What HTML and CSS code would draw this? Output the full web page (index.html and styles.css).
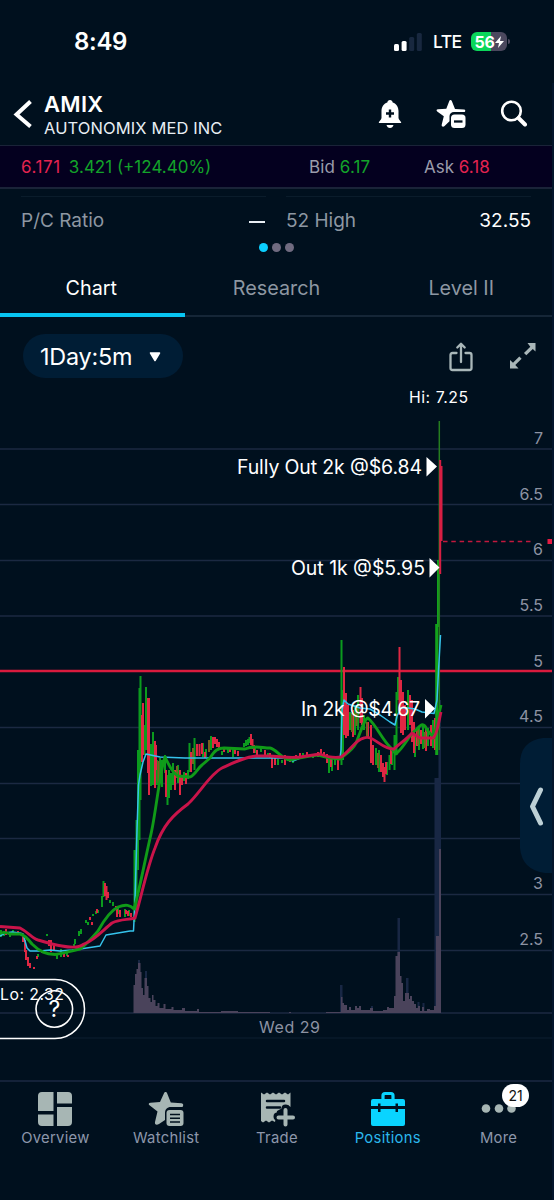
FILE: index.html
```html
<!DOCTYPE html>
<html lang="en">
<head>
<meta charset="utf-8">
<title>AMIX</title>
<link rel="stylesheet" href="styles.css">
</head>
<body>
<div class="phone">
  <div class="status">
    <span class="clock">8:49</span>
    <div class="status-right">
      <svg class="signal" width="28" height="18" viewBox="0 0 28 18"><rect x="0" y="11" width="5" height="7" rx="1.5" fill="#fff"/><rect x="7.6" y="8" width="5" height="10" rx="1.5" fill="#fff"/><rect x="15.2" y="4" width="5" height="14" rx="1.5" fill="#18283f"/><rect x="22.8" y="0" width="5" height="18" rx="1.5" fill="#18283f"/></svg>
      <span class="lte">LTE</span>
      <div class="battery"><span>56</span><svg width="9" height="12" viewBox="0 0 9 12"><path d="M6 0 0 7h4l-1 5 6-7H5z" fill="#fff"/></svg></div>
    </div>
  </div>

  <header class="header">
    <svg class="back" width="20" height="30" viewBox="0 0 20 30"><path d="M17.500 2.500 3.500 15.500 17.500 27.500" fill="none" stroke="#fff" stroke-width="4"/></svg>
    <div class="names"><h1>AMIX</h1><p>AUTONOMIX MED INC</p></div>
    <div class="actions">
      <svg width="24" height="30" viewBox="0 0 24 30"><path d="M12 1c1.500 0 2.500 1 2.700 2.400C18.500 4.700 20.500 8 20.500 12v7c0 1.500 2.800 3.500 2.800 5H.7c0-1.500 2.800-3.500 2.800-5v-7c0-4 2-7.300 5.800-8.600C9.500 2 10.500 1 12 1zM8.500 26h7c-.5 1.800-1.800 3-3.500 3s-3-1.200-3.500-3z" fill="#fff"/><path d="M12 10.500v8M8 14.500h8" stroke="#00101e" stroke-width="2.400"/></svg>
      <svg width="30" height="30" viewBox="0 0 30 30"><path d="M14.500 1c.6 0 1 .3 1.300.9l3.200 8 9 .7c1.500.2 1.700 1.500.7 2.300H18c-2.700 0-4.500 1.800-4.500 4.400v5l-5.200 4.900c-1.200 1-3 .2-2.600-1.500l2.100-8.500-6.600-4.800c-1.200-1-.7-2 .8-2.100l8.300-.5 3-7.900c.2-.6.600-.9 1.200-.9z" fill="#fff"/><rect x="15" y="15.500" width="14.500" height="13.500" rx="3.500" fill="#fff"/><path d="M18 22.500h8.500" stroke="#00101e" stroke-width="2.300"/></svg>
      <svg width="28" height="28" viewBox="0 0 28 28"><circle cx="11.500" cy="12" r="9.300" fill="none" stroke="#fff" stroke-width="2.600"/><path d="m18.500 19 6.500 6.500" stroke="#fff" stroke-width="4" stroke-linecap="round"/></svg>
    </div>
  </header>

  <div class="quote">
    <span class="change"><b class="down">6.171</b><b class="up">3.421 (+124.40%)</b></span>
    <span class="bid">Bid <b class="up">6.17</b></span>
    <span class="ask">Ask <b class="down">6.18</b></span>
  </div>

  <section class="stats">
    <div class="stat"><span>P/C Ratio</span><i class="dash"></i></div>
    <div class="stat"><span>52 High</span><em>32.55</em></div>
  </section>
  <div class="pager"><i class="on"></i><i></i><i></i></div>

  <nav class="tabs"><span class="tab active">Chart</span><span class="tab">Research</span><span class="tab">Level II</span></nav>

  <div class="tools">
    <div class="interval"><span>1Day:5m</span><svg width="12" height="10" viewBox="0 0 12 10"><path d="M1.500 1h9L6 8.500z" fill="#fff" stroke="#fff" stroke-width="1.500" stroke-linejoin="round"/></svg></div>
    <svg class="share" width="24" height="30" viewBox="0 0 24 30" fill="none" stroke="#a9b7b9" stroke-width="2.300" stroke-linecap="round" stroke-linejoin="round"><path d="M7.500 11H3.500Q1.500 11 1.500 13V26Q1.500 28 3.500 28H20.500Q22.500 28 22.500 26V13Q22.500 11 20.500 11H16.500M12 20V2M8.300 5.500 12 1.700l3.700 3.800"/></svg>
    <svg class="expand" width="28" height="28" viewBox="0 0 28 28"><path d="M18.500 1H26.500v8.500l-2.700-2.500-6.500 6.300-2.300-2.300 6.300-6.300zM9.500 26.500H1v-8.500l3 2.700 6.300-6.200 2.300 2.300-6.300 6.200z" fill="#a9b7b9"/></svg>
  </div>

  <main class="chart">
    <svg width="554" height="700" viewBox="0 380 554 700">
      <path class="grid" d="M0 449H552M0 504.500H552M0 560.500H552M0 616H552M0 727.500H552M0 783.500H552M0 838.500H552M0 894.500H552M0 950.500H552M0 1013H552"/>
      <path class="grid faint" d="M0 1038H552"/>

      <g class="vol-blue">
        <path d="M434.500 1013V778h4V1013zM438.500 1013V700h2.500V1013zM397.500 1013V918h2.500V1013zM340 1013V985h2.500V1013zM406 1013V978h2.500V1013zM145 1013V971h2V1013zM138 1013V960h2V1013zM417.500 1013V1002h2V1013zM422.500 1013V1003h2V1013zM371 1013V1006h2V1013z"/>
      </g>
      <path class="vol" d="M133.500 1013V985H135V974H136.500V969H138V963H140.500V972H141.500V988H143V995H144.500V978H147V986H148.500V998H150.500V1002H152V995H153.500V1000H155.500V1006H157.500V1003H159.500V1008H163.500V1004H165.500V1009H171.500V1007H173.500V1010H182V1008H185V1011H197V1009H199V1012H221V1011H238V1012H270V1013zM289 1013V1012H291V1013zM326 1013V1012H341V997H342.500V1003H344V1005H347V1010H349V1007H351V1010H355V1006H357V1008H359V1006H361V1010H370V1008H373V1011H383V1010H387V1007H389V1008H394V996H395.500V956H397.500V952H400V976H401.500V983H403V1001H405V993H409V999H410V996H412V1001H414V1004H416V1008H418V1006H420V1011H422V1007H424V1011H427V1009H430V1010H434V1006H436V936H439V849H441V1013z"/>

      <path class="level" d="M0 671H552"/>

      <g class="candle green">
        <path d="M1 930V937M4 931V936M10 932V937M13 930V935M38 954V957M47 934V936M57 953V959M61 949V957M67 953V956M74 944V946M75 939V944M79 931V936M81 929V934M86 920V923M88 922V925M93 914V916M96 911V914M98 910V913M102 896V907M103.500 881V897M110 900V903M113 902V906M118 907V914M125 909V917M129 910V916"/>
        <path d="M134.500 850V922M136.500 820V910M138 750V870M139.500 688V840M140.500 676V800M144.500 725V755M146 687V750M151 744V786M153 732V785M157 760V785M160 758V782M162 760V787M165 755V773M167.500 775V805M169 770V798M171 773V790M173 763V785M178 765V783M184 772V781M188 770V779M189.500 743V772M194.500 738V770M203 743V757M206 749V757M211 736V750M222 751V755M228 748V753M233 747V757M239 748V750M244 743V747M246 740V746M248 739V745M249.500 737V743M255 747V753M261 748V752M268 753V757M278 759V765M282 760V763M293 757V763M303 753V757M313 754V758M326 755V758M329 757V773M332 758V771M335 757V765"/>
        <path d="M341.500 640V765M343 690V760M350 712V730M355 705V735M358 695V730M364 715V730M376 748V765M379 750V772M387 762V775M389.500 755V770M392 752V765M394.500 735V770M396.500 692V755M398 677V700M408 690V730M415 735V757M419 728V750M423 725V749M428 728V746M433 720V748"/>
      </g>
      <g class="candle red">
        <path d="M6 929V935M18 931V935M23 936V942M25 940V952M26 950V960M28 957V966M30 963V968M34 967V969M37 956V959M42 950V953M49 940V946M51 940V952M54 943V951M64 954V957M68 955V957M90 917V920M92 922V925M97 909V913M105 883V896M106.500 886V900M108 892V898M116 906V910M117 909V917M120 910V917M126 910V914M128 911V916M131 913V917"/>
        <path d="M142 715V762M143 703V755M148 698V773M149 698V795M155 741V788M156 745V770M166 770V797M175 770V790M180 770V795M182 775V785M186 773V784M191 752V772M197 744V756M199.500 744V756M202 743V754M205 752V758M213 737V748M215 737V744M217 739V747M219 742V750M224 748V752M230 748V752M235 749V754M238 751V756M251 734V745M252.500 739V749M254 745V753M257 750V755M265 750V757M270 753V758M272 757V768M275 758V765M285 755V765M290 756V762M296 755V760M300 753V758M307 752V756M318 752V757M321 749V756M324 752V758M327 754V763M331 756V767M338 756V770"/>
        <path d="M344 667V735M346 693V738M348 705V736M353 710V737M360.500 687V723M362 698V725M368 722V737M371 725V763M373 745V765M381 755V772M383 763V777M384.500 767V782M386 762V774M391 750V764M399.500 647V715M401 680V733M403 692V735M405 705V730M410 695V725M412 700V742M414 722V753M417 728V746M421 730V744M426 727V751M431 725V746M435 718V750"/>
      </g>
      <g class="candle olive"><path d="M158.500 761V783M177 766V778M193 748V764M209 740V752M352 713V732M356.500 708V726M367 722V736M378 753V768M418 728V745M425 732V748"/></g>

      <path class="spike" d="M436.700 624V755M438.500 560V627"/>
      <path class="wick" d="M439.300 421V750"/>
      <path class="drop" d="M440.200 460V574M441.500 466V541"/>

      <path class="vwap" d="M0 936 5 933 12 932 20 933 23 934 27 948 30 951 40 951 50 950 60 951 72 950 80 949 100 946 106 935 130 931 133.500 931 135 900 137 830 138.500 785 140 775 143 762 146 754 160 757 185 758H270L285 758 293 761 305 756 320 755 330 758 340 758 341 750 342 710 344 700 348 704 360 708 370 709 380 715 390 722 395 725 397 716 401 708 408 708 415 709 422 712 434 713.500 437 700 438.500 671 440.500 635"/>
      <path class="ma green-line" d="M0 933Q6 932 10 934L20 934Q25 935 32 944C40 952 46 954 55 954.500C65 953 75 950 80 949C88 943 92 938 98 931C104 920 110 911 118 907C126 904 130 905 134 909C139 892 145 860 151 834C156 812 160 770 165 757C168 763 172 773 178 776L190 777C195 775 198 768 202 765L210 758C215 750 218 748 224 748L245 749C254 745 262 748 270 748C276 749 282 759 290 760C300 758 308 756 318 755L330 758 340 759C345 754 352 751 356 743C360 734 364 719 368 718C376 725 382 739 390 747L396 754C406 745 410 733 416 730C421 724 424 722 427 730L434 738 438 718 441 705"/>
      <path class="ma red-line" d="M0 926.500 20 928C28 932 32 938 38 940C48 943 55 945 62 946C72 948 79 948 84 944C95 940 103 930 112 923C120 919 128 920 135 918C142 894 147 868 155 848C163 825 173 815 188 804C200 793 210 774 222 768C235 762 245 757 256 756L270 756C280 757 290 758 300 757L320 754C330 758 335 758 341 757C350 751 356 739 364 738C373 734 382 750 394 749C400 743 406 740 412 733L420 738 433 738C437 736 439 720 441 712"/>

      <path d="M443 541.500H531" stroke="#c2183e" stroke-width="1.400" stroke-dasharray="4.500 3.800"/>
      <rect x="547.500" y="539" width="5" height="5" fill="#e61b42"/>

      <g class="axis"><text x="543" y="443.500">7</text><text x="543" y="499.500">6.5</text><text x="543" y="555">6</text><text x="543" y="611">5.5</text><text x="543" y="667">5</text><text x="543" y="722">4.5</text><text x="543" y="889">3</text><text x="543" y="945">2.5</text></g>
      <text class="date" x="259" y="1033" textLength="61">Wed 29</text>
      <text class="hilo" x="409" y="403" textLength="59">Hi: 7.25</text>
      <text class="hilo" x="0" y="1000" textLength="64">Lo: 2.32</text>
      <g class="note"><text x="237" y="474" textLength="185">Fully Out 2k @$6.84</text><text x="291" y="575" textLength="134">Out 1k @$5.95</text><text x="301" y="716" textLength="119">In 2k @$4.67</text></g>
      <path d="M426.500 457 437 466.500 426.500 476.500zM429.500 558 439.500 567.500 429.500 577.500zM425 699 435 708.500 425 718.500z" fill="#fff"/>

      <path d="M554 738H543Q520 741 520 764V848Q522 870 545 873H554z" fill="#001d35"/>
      <path d="m540.500 790-8 16.500 8 16.500" fill="none" stroke="#bdd0d6" stroke-width="5" stroke-linecap="round" stroke-linejoin="round"/>

      <path d="M0 979.500H55A29 29 0 0 1 55 1038.500H0" fill="none" stroke="#fff" stroke-width="1.500"/>
      <circle cx="54.300" cy="1009" r="18.300" fill="none" stroke="#fff" stroke-width="1.600"/>
      <text class="help" x="54.500" y="1017">?</text>
    </svg>
  </main>

  <footer class="nav">
    <div class="item"><svg width="36" height="36" viewBox="0 0 36 36" fill="#a7b6b4"><path d="M5 1h11.500v19H1V5Q1 1 5 1zM20 1h11Q35 1 35 5v7.500H20zM1 23.500h15.500V35H5Q1 35 1 31zM20 16h15v15Q35 35 31 35H20z"/></svg><span>Overview</span></div>
    <div class="item"><svg width="36" height="36" viewBox="0 0 36 36"><path d="M17.500 1c.8 0 1.300.5 1.600 1.200l3.700 9.300 10.700.7c1.900.2 2.300 2 1 3.800H23c-4 0-6 2.500-6 6v7l-6 4c-2.500 1.500-4.600.5-4-2l2.500-10.500L1.500 14.300c-1.400-1.200-.8-2.400 1-2.600l9.500-.7L16 2.200c.3-.7.8-1.200 1.500-1.200z" fill="#a7b6b4"/><rect x="18.500" y="19" width="17" height="16" rx="3" fill="#a7b6b4"/><path d="M22 23.500h10M22 27.200h10M22 31h10" stroke="#00101e" stroke-width="1.600"/></svg><span>Watchlist</span></div>
    <div class="item"><svg width="36" height="36" viewBox="0 0 36 36"><path d="M2 1.500 5 3.500 8 1.500 11 3.500 14 1.500 17 3.500 20 1.500 23 3.500 26 1.500 29 3.500 31.500 1.500V16L29 14 18 20 16 31 13 29.500 10 31.500 7 29.500 4 31.500 2 30z" fill="#a7b6b4"/><path d="M8 10h17M8 16.500h13" stroke="#00101e" stroke-width="2.500" stroke-linecap="round"/><path d="M26.500 17.500v16M18.500 25.500h16" stroke="#00101e" stroke-width="8" stroke-linecap="round"/><path d="M26.500 19v14.500M19.500 26.500H34" stroke="#a7b6b4" stroke-width="4" stroke-linecap="round"/></svg><span>Trade</span></div>
    <div class="item active"><svg width="36" height="36" viewBox="0 0 36 36"><path d="M13 8V4.500Q13 2.500 15 2.500H21Q23 2.500 23 4.500V8" fill="none" stroke="#09d4ff" stroke-width="3.200"/><path d="M3 8H33Q35 8 35 10V15H28V12.500H25.500V15H10.500V12.500H8V15H1V10Q1 8 3 8zM1 18H8V21H10.500V18H25.500V21H28V18H35V33Q35 35 33 35H3Q1 35 1 33z" fill="#09d4ff"/></svg><span>Positions</span></div>
    <div class="item more"><svg width="36" height="36" viewBox="0 0 36 36" fill="#a7b6b4"><circle cx="5" cy="17.500" r="4.300"/><circle cx="18" cy="17.500" r="4.300"/><circle cx="30.500" cy="17.500" r="4.300"/></svg><span>More</span><b class="badge">21</b></div>
  </footer>
  <i class="edge"></i>
</div>
</body>
</html>
```
FILE: styles.css
```css
* { box-sizing: border-box; }
body { margin: 0; background: #00101e; font-family: Inter, "Liberation Sans", sans-serif; color: #fff; }
.phone { position: relative; width: 554px; height: 1200px; overflow: hidden; display: flex; flex-direction: column; background: #00101e; }
b, em, i { font-weight: inherit; font-style: normal; }
svg { display: block; flex: none; }

.status { height: 83px; display: flex; justify-content: space-between; padding: 0 47px 0 74px; align-items: center; }
.clock { font-size: 24px; font-weight: 600; letter-spacing: -.3px; }
.status-right { display: flex; align-items: center; }
.lte { margin-left: 11px; width: 28px; font-size: 17.500px; font-weight: 500; letter-spacing: -.6px; }
.battery { position: relative; margin-left: 10px; width: 36px; height: 19px; border-radius: 6px; background: linear-gradient(90deg, #0bd75a 56%, #4b485e 56%); display: flex; align-items: center; justify-content: center; font-size: 16px; font-weight: 700; letter-spacing: -.3px; }
.battery::after { content: ""; position: absolute; right: -3px; top: 7px; width: 2px; height: 5px; border-radius: 0 2px 2px 0; background: #4b485e; }

.header { height: 62px; display: flex; align-items: flex-start; padding: 0 25px 0 13px; }
.back { margin: 16px 11px 0 0; }
.names { flex: 1; padding-top: 9px; }
h1 { margin: 0; font-size: 22px; line-height: 24px; font-weight: 600; letter-spacing: .3px; }
.names p { margin: 2px 0 0; font-size: 16.500px; line-height: 20px; letter-spacing: .1px; color: #e8eef4; }
.actions { display: flex; gap: 34px; padding: 16px 1px 0 0; }

.quote { height: 44px; border: solid #1a2338; border-width: 1px 0 2px; background: #04001f; display: flex; align-items: center; padding: 0 0 0 21px; font-size: 17px; letter-spacing: 0; color: #9b9cab; }
.change { width: 288px; display: flex; gap: 8px; }
.change .down { letter-spacing: .6px; }
.bid { width: 115px; letter-spacing: .1px; }
.ask { letter-spacing: 0; }
.up { color: #13a32a; }
.down { color: #e42350; }

.stats { height: 52px; display: grid; grid-template-columns: 245px 245px; column-gap: 20px; padding: 7px 0 0 21px; }
.stat { border-top: 1px solid #0a1c2b; display: flex; justify-content: space-between; align-items: center; font-size: 19px; color: #8d97a2; padding-top: 3px; }
.stat em { color: #fff; }
.dash { width: 16px; height: 2px; background: #e8eef4; margin: 2px 1px 0 0; }
.pager { height: 20px; display: flex; justify-content: center; gap: 4px; padding: 2px 2px 0 0; }
.pager i { width: 9px; height: 9px; border-radius: 50%; background: #706b80; }
.pager .on { background: #0bcfff; }

.tabs { height: 56px; display: grid; grid-template-columns: repeat(3, 1fr); border-bottom: 2px solid #152637; }
.tab { display: flex; align-items: center; justify-content: center; font-size: 19.800px; color: #8d97a2; padding-right: 1px; }
.tab.active { color: #fff; border-bottom: 4px solid #07c5f2; margin-bottom: -2px; padding-top: 2px; padding-right: 2px; }

.tools { height: 63px; display: flex; padding: 17px 17px 0 23px; }
.interval { width: 160px; height: 44px; border-radius: 22px; background: #001d35; display: flex; align-items: center; padding: 1px 0 0 17px; gap: 17px; font-size: 23.400px; letter-spacing: -.2px; }
.share { margin: 8px 36px 0 266px; }
.expand { margin-top: 8px; }

.chart { height: 700px; }
.grid { stroke: #1b2942; stroke-width: 1.300; }
.faint { stroke: #081a2b; }
.vol { fill: #4a435b; }
.vol-blue { fill: #182744; }
.level { stroke: #d91b3e; stroke-width: 2.700; }
.candle { fill: none; stroke-width: 2; }
.green { stroke: #0b9b1e; }
.red { stroke: #df2743; }
.olive { stroke: #77611f; }
.spike { stroke: #13a31c; stroke-width: 3; }
.wick { stroke: #267e20; stroke-width: 1.500; }
.drop { stroke: #d71e43; stroke-width: 2; }
.vwap { fill: none; stroke: #35c3ec; stroke-width: 1.500; stroke-linejoin: round; }
.ma { fill: none; stroke-width: 2.900; stroke-linejoin: round; }
.green-line { stroke: #109b18; }
.red-line { stroke: #c9144a; }
.axis text, .date { font-size: 16px; fill: #8d93a3; }
.axis text { text-anchor: end; }
.hilo { font-size: 15.800px; fill: #fff; }
.note { font-size: 19.500px; fill: #fff; }
.help { font-size: 23px; fill: #fff; text-anchor: middle; }

.nav { height: 120px; border-top: 2px solid #142239; display: grid; grid-template-columns: repeat(5, 1fr); padding-top: 9px; }
.item { position: relative; display: flex; flex-direction: column; align-items: center; font-size: 14.800px; letter-spacing: .3px; line-height: 18px; color: #8d97ab; }
.item span { margin-top: 2px; }
.item.active { color: #2bb8ee; }
.badge { position: absolute; left: 59px; top: -7px; width: 27px; height: 23px; border-radius: 12px; background: #fff; color: #111; font-size: 14px; line-height: 23px; text-align: center; letter-spacing: 0; }
.edge { position: absolute; right: 0; top: 83px; width: 2px; height: 1117px; background: #03152b; }
```
